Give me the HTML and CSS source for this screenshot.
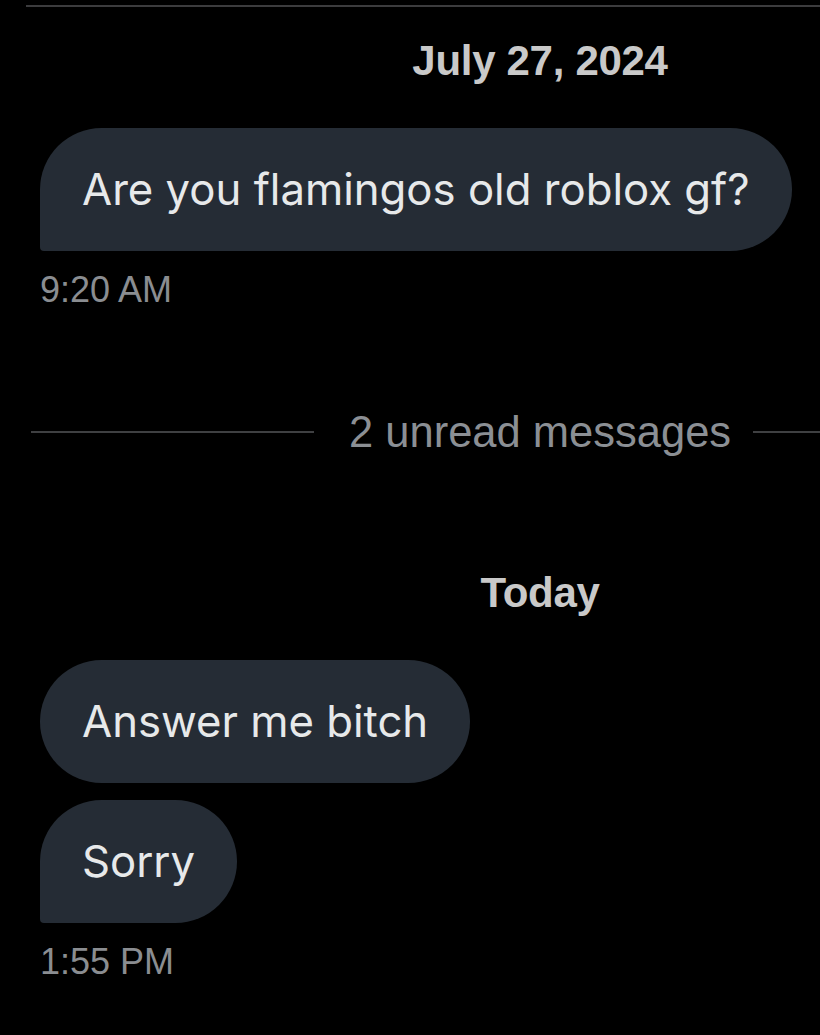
FILE: index.html
```html
<!DOCTYPE html>
<html lang="en">
<head>
    <meta charset="UTF-8">
    <meta name="viewport" content="width=device-width, initial-scale=1.0">
    <title>Messages</title>
    <link rel="stylesheet" href="styles.css">
</head>
<body>
    <div class="top-rule"></div>

    <div class="day-label"><span>July 27, 2024</span></div>

    <div class="group">
        <div class="bubble last">Are you flamingos old roblox gf?</div>
        <div class="time">9:20 AM</div>
    </div>

    <div class="unread">
        <div class="unread-line left"></div>
        <span>2 unread messages</span>
        <div class="unread-line right"></div>
    </div>

    <div class="day-label today"><span>Today</span></div>

    <div class="group">
        <div class="bubble">Answer me bitch</div>
        <div class="bubble last">Sorry</div>
        <div class="time">1:55 PM</div>
    </div>
</body>
</html>
```

FILE: styles.css
```css
body {
    margin: 0;
    padding: 0;
    background-color: #000;
    font-family: "Liberation Sans", Arial, sans-serif;
    color: #e7e9ea;
}
.top-rule {
    margin: 5px 0 0 26px;
    height: 2px;
    background-color: #3c3c3e;
}
.day-label {
    padding-left: 260px;
    text-align: center;
    margin-top: 30px;
    height: 60px;
}
.day-label span {
    display: inline-block;
    font-family: "Liberation Sans Narrow", "Liberation Sans", Arial, sans-serif;
    font-weight: bold;
    font-size: 42px;
    color: #c9c9c9;
    letter-spacing: -0.3px;
}
.day-label.today {
    margin-top: 112px;
}
.group {
    margin-top: 31px;
    padding-left: 40px;
    display: flex;
    flex-direction: column;
    align-items: flex-start;
    gap: 17px;
}
.bubble {
    background-color: #252c35;
    border-radius: 62px;
    height: 123px;
    box-sizing: border-box;
    padding: 0 42px;
    display: flex;
    align-items: center;
    font-family: Inter, "Noto Sans", sans-serif;
    font-size: 43.7px;
    color: #e7e9ea;
}
.bubble.last {
    border-bottom-left-radius: 4px;
}
.time {
    margin-top: 1px;
    font-size: 36px;
    color: #8a8d91;
}
.unread {
    margin-top: 96px;
    padding-left: 31px;
    display: flex;
    align-items: center;
    height: 50px;
}
.unread span {
    margin: 0 22px 0 35px;
    font-family: "Liberation Sans Narrow", "Liberation Sans", Arial, sans-serif;
    font-size: 43.5px;
    color: #8b8f94;
    white-space: nowrap;
}
.unread-line {
    height: 2px;
    background-color: #3f4042;
}
.unread-line.left {
    width: 283px;
}
.unread-line.right {
    flex: 1;
}
```
